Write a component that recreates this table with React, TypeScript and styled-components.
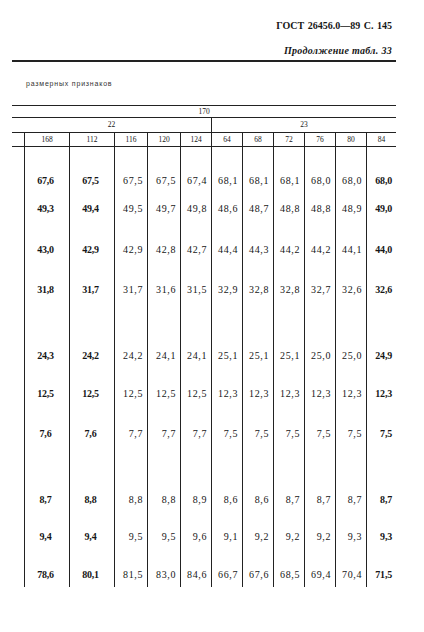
import styled, { createGlobalStyle } from 'styled-components';

const GlobalStyle = createGlobalStyle`
    html, body {
        margin: 0;
        padding: 0;
        background: #ffffff;
    }
`;

const COLUMNS = '12px 45px 45px 33px 33px 31px 31px 31px 31px 31px 31px 30px';

const sizes = ['168', '112', '116', '120', '124', '64', '68', '72', '76', '80', '84'];

// row heights chosen so the figures sit on the scan's baselines
const rowHeights = [40, 28, 41, 40, 66, 38, 40, 66, 37, 38];

const rows = [
    ['67,6', '67,5', '67,5', '67,5', '67,4', '68,1', '68,1', '68,1', '68,0', '68,0', '68,0'],
    ['49,3', '49,4', '49,5', '49,7', '49,8', '48,6', '48,7', '48,8', '48,8', '48,9', '49,0'],
    ['43,0', '42,9', '42,9', '42,8', '42,7', '44,4', '44,3', '44,2', '44,2', '44,1', '44,0'],
    ['31,8', '31,7', '31,7', '31,6', '31,5', '32,9', '32,8', '32,8', '32,7', '32,6', '32,6'],
    ['24,3', '24,2', '24,2', '24,1', '24,1', '25,1', '25,1', '25,1', '25,0', '25,0', '24,9'],
    ['12,5', '12,5', '12,5', '12,5', '12,5', '12,3', '12,3', '12,3', '12,3', '12,3', '12,3'],
    ['7,6', '7,6', '7,7', '7,7', '7,7', '7,5', '7,5', '7,5', '7,5', '7,5', '7,5'],
    ['8,7', '8,8', '8,8', '8,8', '8,9', '8,6', '8,6', '8,7', '8,7', '8,7', '8,7'],
    ['9,4', '9,4', '9,5', '9,5', '9,6', '9,1', '9,2', '9,2', '9,2', '9,3', '9,3'],
    ['78,6', '80,1', '81,5', '83,0', '84,6', '66,7', '67,6', '68,5', '69,4', '70,4', '71,5'],
];

function App() {
    return (
        <>
            <GlobalStyle />
            <Page>
                <RunningHead>ГОСТ 26456.0—89 С. 145</RunningHead>
                <Continuation>Продолжение табл. 33</Continuation>
                <Table>
                    <Caption>размерных признаков</Caption>
                    <SpanRow>170</SpanRow>
                    <SubHeader>
                        <SubCell>22</SubCell>
                        <SubCell $divider>23</SubCell>
                    </SubHeader>
                    <HeadGrid>
                        <HeadCell />
                        {sizes.map((s) => (
                            <HeadCell key={s} $divider>
                                {s}
                            </HeadCell>
                        ))}
                    </HeadGrid>
                    <Body>
                        {rows.map((row, r) => (
                            <Row key={r} style={{ height: rowHeights[r] }}>
                                <Cell />
                                {row.map((v, c) => (
                                    <Cell
                                        key={c}
                                        $divider
                                        $bold={c < 2 || c === 10}
                                        $centered={c < 2}
                                    >
                                        {v}
                                    </Cell>
                                ))}
                            </Row>
                        ))}
                        <Row style={{ height: 6 }}>
                            <Cell />
                            {sizes.map((s) => (
                                <Cell key={s} $divider />
                            ))}
                        </Row>
                    </Body>
                </Table>
            </Page>
        </>
    );
}

const Page = styled.div`
    width: 424px;
    height: 632px;
    box-sizing: border-box;
    padding-top: 20px;
    overflow: hidden;
    background: #fff;
    color: #161616;
    font-family: 'Liberation Serif', 'DejaVu Serif', serif;
`;

const RunningHead = styled.div`
    text-align: right;
    padding-right: 32px;
    font-size: 10px;
    line-height: 12px;
    font-weight: bold;
    word-spacing: 1px;
`;

const Continuation = styled.div`
    margin-top: 13px;
    text-align: right;
    padding-right: 32px;
    font-size: 10px;
    line-height: 12px;
    font-style: italic;
    font-weight: bold;
    letter-spacing: 0.3px;
`;

const Table = styled.div`
    margin: 3px 28px 0 12px;
    border-top: 2px solid #222;
`;

const Caption = styled.div`
    padding: 17px 0 16px 14px;
    font-family: 'Liberation Sans', Arial, sans-serif;
    font-size: 7px;
    line-height: 10px;
    letter-spacing: 0.8px;
    color: #333;
`;

const SpanRow = styled.div`
    height: 11px;
    border-top: 1.5px solid #222;
    text-align: center;
    font-size: 7.5px;
    line-height: 11px;
`;

const SubHeader = styled.div`
    display: grid;
    grid-template-columns: 199px 185px;
    height: 14px;
    border-top: 1px solid #222;
`;

const SubCell = styled.div<{ $divider?: boolean }>`
    text-align: center;
    font-size: 7.5px;
    line-height: 14px;
    border-left: ${(p) => (p.$divider ? '1px solid #222' : 'none')};
`;

const HeadGrid = styled.div`
    display: grid;
    grid-template-columns: ${COLUMNS};
    height: 13px;
    border-top: 1.5px solid #222;
    border-bottom: 1px solid #222;
`;

const HeadCell = styled.div<{ $divider?: boolean }>`
    text-align: center;
    font-size: 7.5px;
    line-height: 13px;
    border-left: ${(p) => (p.$divider ? '1px solid #222' : 'none')};
`;

const Body = styled.div`
    display: flex;
    flex-direction: column;
`;

const Row = styled.div`
    display: grid;
    grid-template-columns: ${COLUMNS};
`;

const Cell = styled.div<{ $divider?: boolean; $bold?: boolean; $centered?: boolean }>`
    display: flex;
    align-items: flex-end;
    justify-content: ${(p) => (p.$centered ? 'center' : 'flex-end')};
    padding: ${(p) => (p.$centered ? '0 3px 0 0' : '0 4px 0 0')};
    border-left: ${(p) => (p.$divider ? '1px solid #222' : 'none')};
    font-size: 10px;
    line-height: 12px;
    font-weight: ${(p) => (p.$bold ? 600 : 'normal')};
    letter-spacing: ${(p) => (p.$bold ? '-0.2px' : '0.6px')};
    white-space: nowrap;
`;

export default App;
